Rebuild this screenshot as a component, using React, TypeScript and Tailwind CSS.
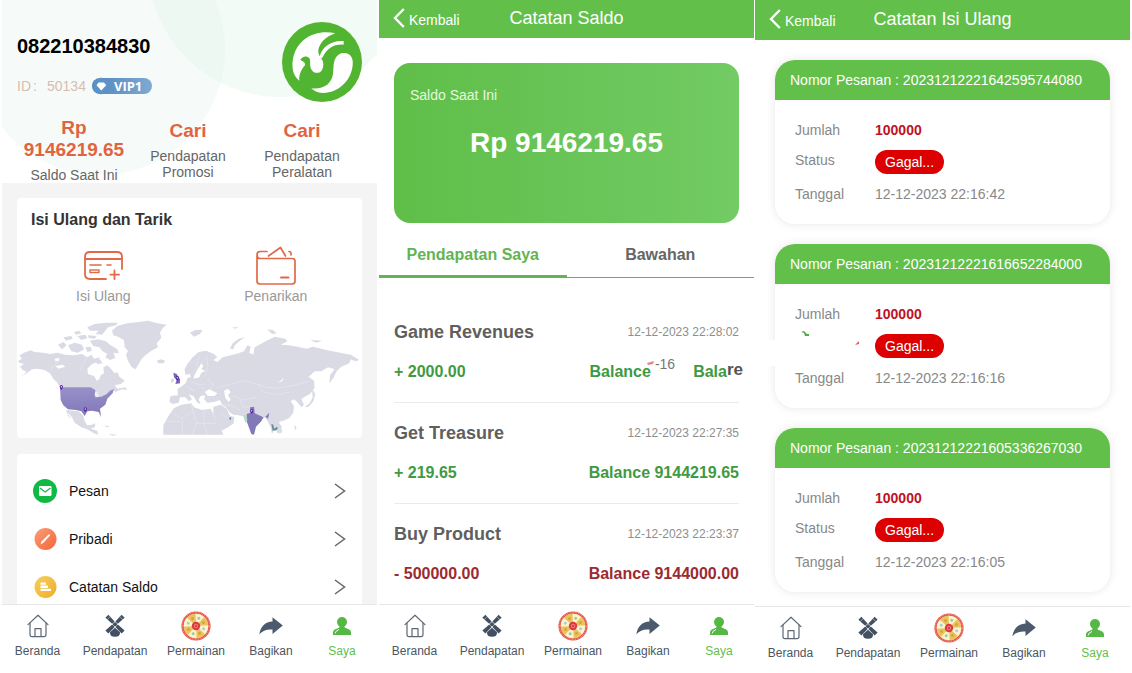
import React from "react";

const navItems = ["Beranda", "Pendapatan", "Permainan", "Bagikan", "Saya"];

const orders = [
  { no: "20231212221642595744080", status: "Status", date: "12-12-2023 22:16:42" },
  { no: "20231212221616652284000", status: "", date: "12-12-2023 22:16:16" },
  { no: "20231212221605336267030", status: "Status", date: "12-12-2023 22:16:05" },
];

function HomeIcon() {
  return (
    <svg width="22" height="24" viewBox="0 0 22 24" fill="none" stroke="#5d6876" strokeWidth="1.2" strokeLinejoin="round" strokeLinecap="round">
      <path d="M1 10.6 L11 1.2 L21 10.6" />
      <path d="M3 9 V20.5 Q3 22.6 5 22.6 H17 Q19 22.6 19 20.5 V9" />
      <path d="M8 22.4 V14.600 H14 V22.4" />
    </svg>
  );
}

function MillIcon() {
  return (
    <svg width="20" height="24" viewBox="0 0 20 24" fill="#434f62">
      <path d="M0.4 3.800 L3.400 0.800 L9.600 7.400 L7.200 9.800 Z" />
      <path d="M19.6 3.800 L16.600 0.800 L10.400 7.400 L12.800 9.800 Z" />
      <path d="M0.4 16.400 L3.400 19.400 L9.600 13 L7.200 10.600 Z" />
      <path d="M19.6 16.400 L16.600 19.400 L10.400 13 L12.800 10.600 Z" />
      <circle cx="10" cy="10.200" r="2" />
      <path d="M10 13.800 L15 18.200 Q15.400 22.800 10 22.800 Q4.600 22.800 5 18.200 Z" />
      <path d="M2.200 5.600 L4.800 3 M17.800 5.600 L15.200 3" stroke="#fff" strokeWidth="0.500" />
    </svg>
  );
}

function WheelIcon() {
  const sectors = [0, 45, 90, 135, 180, 225, 270, 315];
  return (
    <svg width="30" height="30" viewBox="0 0 30 30">
      <circle cx="15" cy="15" r="14.600" fill="#e4574f" />
      <circle cx="15" cy="15" r="13.600" fill="none" stroke="#f6a49a" strokeWidth="0.8" strokeDasharray="1.500 1.500" />
      <circle cx="15" cy="15" r="12.300" fill="#f6dc8c" />
      {sectors.map((a, i) => (
        <g key={a} transform={`rotate(${a + 20} 15 15)`}>
          <path d="M15 15 L10.400 3.700 A12.200 12.200 0 0 1 19.600 3.700 Z" fill={i % 2 ? "#e9c35e" : "#fcf3cf"} />
          <circle cx="15" cy="6.800" r="1.500" fill={i % 4 === 0 ? "#9ccba0" : i % 4 === 2 ? "#a9cfd6" : "#d9a443"} />
        </g>
      ))}
      <circle cx="15" cy="15" r="4.200" fill="#dc3b41" />
      <circle cx="15" cy="15" r="2" fill="#ef8a86" />
      <circle cx="15" cy="15" r="1" fill="#c9242d" />
    </svg>
  );
}

function ShareIcon() {
  return (
    <svg width="24" height="18" viewBox="0 0 24 18" fill="#4b5a6c">
      <path d="M13.500 0.200 L23.800 8.600 L13.500 17 V12.600 Q5.500 11.600 0.300 17.200 Q2.500 5.200 13.500 4.600 Z" />
    </svg>
  );
}

function UserIcon() {
  return (
    <svg width="20" height="20" viewBox="0 0 20 20">
      <circle cx="10" cy="6" r="5" fill="#55b845" />
      <path d="M7.400 9 H12.600 V11.600 L17.200 13.600 Q19 14.600 19 16.600 V19 H1 V16.600 Q1 14.600 2.800 13.600 L7.400 11.600 Z" fill="#55b845" />
      <path d="M3.200 17 Q3.400 15 6.600 13.600" fill="none" stroke="#fff" strokeWidth="1" strokeLinecap="round" />
    </svg>
  );
}

const navIcons = [<HomeIcon />, <MillIcon />, <WheelIcon />, <ShareIcon />, <UserIcon />];

function BottomNav({ height }: { height: string }) {
  return (
    <nav className={`grid shrink-0 grid-cols-[71fr_84fr_78fr_72fr_70fr] content-start border-t border-[#e6e6e6] bg-white pt-1.5 ${height}`}>
      {navItems.map((label, i) => (
        <a
          key={label}
          href="#"
          className={`flex flex-col items-center text-[12px] leading-4 ${i === 4 ? "text-[#62c04a]" : "text-[#4b5661]"}`}
        >
          <span className="flex h-8 items-center pb-0.5">{navIcons[i]}</span>
          {label}
        </a>
      ))}
    </nav>
  );
}

function TopBar({ title, height }: { title: string; height: string }) {
  return (
    <header className={`grid shrink-0 grid-cols-[1fr_auto_1fr] items-center bg-[#62c04a] text-white ${height}`}>
      <button type="button" className="flex items-center gap-1 pb-0.5 pl-3.5 text-left text-[14px]">
        <svg width="12" height="20" viewBox="0 0 12 20" fill="none" stroke="#fff" strokeWidth="2.400">
          <path d="M10.800 1 L2 10 L10.800 19" />
        </svg>
        <span className="pt-1 leading-5">Kembali</span>
      </button>
      <h1 className="pb-0.5 text-[18px] leading-6">{title}</h1>
    </header>
  );
}

function Logo() {
  return (
    <svg width="80" height="80" viewBox="30 20 240 240" role="img" aria-label="Logo">
      <circle cx="150" cy="140" r="120" fill="#52b531" />
      <path
        d="M190 54 C160 46 120 52 95 74 C66 98 56 138 64 170 C68 182 74 190 82 196 C80 178 88 162 99 150 C101 144 96 139 85 134 C90 124 104 119 112 129 C117 136 112 148 117 160 C123 175 143 177 150 164 C157 150 154 138 147 128 C141 120 138 112 139 104 C143 84 160 64 190 54 Z"
        fill="#fff"
      />
      <path d="M143 126 C147 96 178 74 215 77 L215 88 C185 86 166 98 151 127 C148 128 145 128 143 126 Z" fill="#fff" />
      <path d="M207 114 C232 108 245 124 242 150 C238 196 198 234 152 233 C136 232 126 227 118 219 C152 224 179 206 183 176 C186 152 181 126 207 114 Z" fill="#fff" />
    </svg>
  );
}

function WorldMap() {
  return (
    <svg viewBox="51 0 1035 384" className="block w-full" role="img" aria-label="Peta dunia">
      <defs>
        <linearGradient id="usa" x1="0" y1="0" x2="0" y2="1">
          <stop offset="0" stopColor="#9790c8" />
          <stop offset="1" stopColor="#8078b8" />
        </linearGradient>
      </defs>
      <g fill="#d9dae4">
        <path d="M55 152 L66 146 L58 136 L72 128 L92 121 L104 126 L130 128 L150 132 L172 128 L196 134 L222 136 L246 132 L262 142 L274 134 L282 146 L300 142 L292 156 L276 162 L262 176 L264 192 L282 198 L290 212 L298 208 L302 196 L312 190 L310 172 L322 166 L334 178 L344 190 L352 186 L358 200 L374 212 L362 222 L344 226 L352 236 L376 232 L382 240 L366 238 L346 246 L338 238 L318 256 L300 262 L290 250 L272 240 L180 232 L172 218 L160 206 L150 190 L134 180 L112 176 L96 178 L80 190 L62 200 L80 186 L68 180 L60 170 L72 162 L58 158 Z" />
        <path d="M198 300 L236 304 L250 318 L254 334 L262 346 L276 344 L286 340 L284 352 L272 356 L292 362 L294 374 L282 370 L262 358 L244 352 L224 338 L216 322 L202 306 L212 328 L204 318 Z" />
        <path d="M336 62 L352 48 L382 40 L416 36 L444 32 L472 40 L500 44 L488 54 L480 68 L484 84 L470 100 L474 112 L452 124 L438 134 L424 148 L414 166 L406 178 L394 170 L384 152 L378 134 L384 122 L374 112 L372 90 L354 80 L340 76 Z" />
        <path d="M262 52 L284 42 L318 38 L354 38 L348 46 L324 52 L316 62 L306 74 L286 72 L296 62 L270 62 Z" />
        <path d="M270 92 L294 88 L318 94 L330 104 L352 118 L356 130 L340 128 L346 144 L330 150 L316 142 L322 132 L308 124 L298 112 L280 108 Z" />
        <path d="M204 106 L224 98 L246 104 L252 118 L234 128 L214 124 Z M174 104 L190 96 L200 106 L186 118 Z M232 78 L256 74 L262 84 L244 90 Z M190 82 L214 78 L218 86 L198 92 Z M256 112 L272 110 L276 122 L262 126 Z M284 152 L300 148 L308 160 L292 162 Z M222 66 L238 62 L244 70 L228 74 Z M264 76 L290 78 L284 86 L266 84 Z" />
        <path d="M470 152 L482 148 L496 152 L490 160 L476 160 Z M512 210 L520 204 L522 214 L514 218 Z" />
        <path d="M554 178 L562 162 L578 142 L596 126 L618 122 L642 132 L652 142 L640 150 L652 156 L668 142 L692 136 L716 130 L732 124 L742 106 L752 110 L748 128 L760 134 L764 112 L782 102 L800 92 L824 80 L856 86 L862 94 L842 104 L866 106 L892 110 L920 116 L938 110 L964 116 L990 122 L1020 128 L1052 134 L1078 150 L1066 154 L1052 148 L1048 160 L1024 170 L1010 184 L1000 204 L988 220 L990 196 L1004 178 L984 172 L964 184 L944 184 L926 200 L942 212 L944 234 L930 252 L914 260 L904 268 L912 284 L904 292 L894 278 L882 268 L872 274 L882 288 L880 308 L868 324 L850 332 L836 336 L846 352 L836 366 L824 356 L816 372 L812 352 L804 336 L796 322 L784 330 L766 350 L758 372 L748 352 L742 334 L728 318 L704 316 L690 308 L678 292 L666 284 L660 270 L642 276 L622 278 L612 268 L616 256 L602 258 L596 268 L602 282 L592 278 L580 258 L566 252 L576 268 L566 274 L556 262 L540 262 L536 278 L518 282 L508 276 L512 258 L534 256 L532 238 L546 228 L558 218 L562 204 L572 202 L570 192 L556 194 Z" />
        <path d="M490 374 L490 346 L504 320 L522 294 L544 284 L574 280 L582 292 L606 300 L632 296 L640 312 L658 346 L670 374 Z" />
        <path d="M640 290 L662 284 L680 296 L690 318 L706 322 L702 340 L684 352 L662 364 L654 342 L640 310 Z" />
        <path d="M690 116 L698 100 L716 86 L734 82 L718 94 L704 106 L700 118 Z M570 68 L586 60 L608 60 L600 72 L582 80 Z M802 58 L818 60 L830 70 L816 72 Z M930 90 L966 92 L950 98 Z M696 52 L716 52 L706 56 Z M936 236 L946 252 L940 274 L926 290 L914 292 L930 278 L938 262 Z M884 346 L890 352 L884 362 Z M314 346 L330 350 L318 352 Z M326 372 L352 374 L338 377 Z" />
      </g>
      <g fill="#fff">
        <path d="M584 194 L594 176 L604 160 L610 168 L604 178 L616 182 L604 188 L598 202 L580 206 Z" />
        <path d="M614 246 L628 238 L652 250 L644 258 L624 258 Z M672 242 L684 236 L692 246 L684 256 L692 268 L686 276 L676 264 Z" />
        <path d="M166 168 L188 164 L196 170 L176 176 Z M164 146 L178 144 L176 154 L166 154 Z" />
        <path d="M704 314 L736 320 L744 342 L752 374 L700 374 L700 344 Z" />
        <path d="M834 218 L852 204 L846 214 Z" />
      </g>
      <g fill="none" stroke="#ebebf2" strokeWidth="1.500">
        <path d="M622 206 L640 220 L632 238 M560 230 L584 244 M572 214 L596 224 L618 222 M604 232 L618 244 M650 234 L700 220 L730 212 L770 222 L800 232 L840 234 L880 226 L926 214 M774 224 L790 246 L830 254 L870 246 M700 258 L730 270 L770 262 M720 270 L728 290 L760 292 M664 284 L700 288 L720 300 M598 138 L588 176 M618 136 L624 168 L614 202" />
        <path d="M520 310 L546 326 L548 374 M546 326 L580 300 M574 284 L590 340 L576 374 M612 300 L612 340 L650 340 M590 340 L612 340 L622 374 M500 334 L540 334 M664 310 L690 330 M264 136 L240 180 M180 146 L150 180" />
      </g>
      <path d="M180 232 L272 232 L286 240 L284 256 L292 260 L304 260 L320 252 L330 242 L342 236 L338 250 L322 266 L316 284 L300 296 L303 322 L296 306 L276 302 L262 304 L254 318 L244 304 L228 300 L204 298 L190 286 L182 270 Z" fill="url(#usa)" />
      <path d="M286 246 L294 244 L292 262 L286 262 Z" fill="#eceaf6" />
      <path d="M740 312 L752 308 L750 292 L762 290 L764 310 L790 322 L784 334 L768 350 L762 374 L754 372 L746 350 L740 334 Z M796 320 L808 308 L804 326 Z" fill="#8179b8" />
      <path d="M520 188 L530 192 L540 208 L540 220 L526 222 L530 210 L522 202 Z" fill="#7566b9" />
      <path d="M814 342 L820 344 L822 356 L832 350 L834 360 L818 362 Z M686 326 L694 320 L692 330 Z" fill="#5f8d98" />
      <path d="M730 318 L740 312 L742 332 L736 338 Z" fill="#b4d8cb" />
      <circle cx="838" cy="362" r="8" fill="#cfe3e4" />
      {[
        [184, 231],
        [256, 298],
        [532, 204],
        [755, 303],
      ].map(([x, y]) => (
        <g key={x}>
          <path d={`M${x - 5} ${y - 1} A5 5 0 1 1 ${x + 5} ${y - 1} Q${x + 4} ${y + 4} ${x} ${y + 9} Q${x - 4} ${y + 4} ${x - 5} ${y - 1} Z`} fill="#5a24a8" />
          <circle cx={x} cy={y - 1} r="2.200" fill="#e9dcff" />
        </g>
      ))}
    </svg>
  );
}

function Stat({ value, label }: { value: string; label: string }) {
  return (
    <div className="flex flex-col gap-1.5 px-1.5 text-center">
      <strong className="text-[19px] leading-[22px] text-[#e0653f]">
        {value.split("|").map((line) => (
          <span key={line} className="block">{line}</span>
        ))}
      </strong>
      <span className="text-[14px] leading-4 text-[#666]">{label}</span>
    </div>
  );
}

const menu = [
  {
    label: "Pesan",
    icon: (
      <svg width="24" height="24" viewBox="0 0 24 24">
        <circle cx="12" cy="12" r="12" fill="#10b944" />
        <rect x="6" y="7" width="12.500" height="10" rx="1.200" fill="#fff" />
        <path d="M7 9 L12.200 13 L17.500 9" fill="none" stroke="#10b944" strokeWidth="1.200" />
      </svg>
    ),
  },
  {
    label: "Pribadi",
    icon: (
      <svg width="24" height="24" viewBox="0 0 24 24">
        <defs>
          <linearGradient id="pen" x1="0" y1="0" x2="1" y2="1">
            <stop offset="0" stopColor="#fb9f78" />
            <stop offset="1" stopColor="#f56437" />
          </linearGradient>
        </defs>
        <circle cx="12.500" cy="12" r="11" fill="url(#pen)" />
        <path d="M7.500 17.500 L8.500 14.500 L15.500 7.500 Q17.500 6.500 16.800 8.800 L10.400 15.800 Z" fill="#fff" />
      </svg>
    ),
  },
  {
    label: "Catatan Saldo",
    icon: (
      <svg width="24" height="24" viewBox="0 0 24 24">
        <defs>
          <linearGradient id="coin" x1="0" y1="0" x2="1" y2="1">
            <stop offset="0" stopColor="#f7cf5f" />
            <stop offset="1" stopColor="#ecae2a" />
          </linearGradient>
        </defs>
        <circle cx="12.500" cy="12" r="11" fill="url(#coin)" />
        <path d="M7.500 7.500 H13 V9.800 H7.500 Z M7.500 10.600 H15 V12.900 H7.500 Z M7.500 13.700 H18 V16 H7.500 Z" fill="#fff" />
      </svg>
    ),
  },
];

function Profile() {
  return (
    <section className="flex h-full min-h-0 flex-col pr-px">
      <main className="min-h-0 flex-1 overflow-hidden bg-[#f4f4f4]">
        <div className="relative overflow-hidden bg-white">
          <svg className="absolute inset-0 h-full w-full" aria-hidden="true">
            <circle cx="98" cy="50" r="125" fill="#e0f3ea" fillOpacity="0.300" />
            <circle cx="278" cy="-35" r="132" fill="#d8f3e0" fillOpacity="0.330" />
          </svg>
          <div className="relative flex justify-between px-[15px] pt-[22px]">
            <div className="pt-3">
              <h1 className="text-[20px] leading-6 font-bold text-black">082210384830</h1>
              <div className="flex items-center gap-1.5 pt-4">
                <span className="text-[14px] leading-6 text-[#d6bdb0]">
                  ID<span className="inline-block w-4 pl-0.5">:</span>50134
                </span>
                <span className="flex h-4 items-center gap-1 rounded-full bg-linear-to-r from-[#5187bd] to-[#7ea9d2] pr-2.5 font-['Open_Sans',sans-serif] text-[13px] leading-4 font-bold text-white">
                  <svg width="18" height="18" viewBox="0 0 16 18">
                    <path d="M8 0.500 L15.500 4.500 V13.500 L8 17.500 L0.500 13.500 V4.500 Z" fill="#5b93c8" />
                    <path d="M5.500 5.500 H11 L13.200 8.300 L8.300 13.500 L3.500 8.300 Z" fill="#fff" />
                  </svg>
                  VIP1
                </span>
              </div>
            </div>
            <Logo />
          </div>
          <div className="relative grid grid-cols-3 items-center pt-[15px] pr-[18px] pl-[15px]">
            <Stat value="Rp|9146219.65" label="Saldo Saat Ini" />
            <Stat value="Cari" label="Pendapatan Promosi" />
            <Stat value="Cari" label="Pendapatan Peralatan" />
          </div>
        </div>
        <div className="flex flex-col gap-4 px-[15px] pt-[15px]">
          <div className="rounded bg-white">
            <h2 className="px-3.5 pt-2.5 text-[16px] leading-6 font-bold text-[#333]">Isi Ulang dan Tarik</h2>
            <div className="grid grid-cols-2 pt-3">
              <a href="#" className="flex flex-col items-center text-[14px] leading-4 text-[#999]">
                <svg width="44" height="44" viewBox="0 0 44 44" fill="none" stroke="#e06a48" strokeWidth="1.800" strokeLinecap="round">
                  <path d="M25 35 H9 Q4 35 4 30 V13 Q4 8 9 8 H36 Q41 8 41 13 V25" />
                  <path d="M4 15 H41" />
                  <path d="M9 21 H20 M26 21 H30" strokeWidth="1.600" />
                  <rect x="9" y="26" width="9" height="2.500" strokeWidth="1.400" />
                  <path d="M33.500 26.500 V35 M29.500 30.700 H38" />
                </svg>
                Isi Ulang
              </a>
              <a href="#" className="flex flex-col items-center text-[14px] leading-4 text-[#999]">
                <svg width="44" height="44" viewBox="0 0 44 44" fill="none" stroke="#e06a48" strokeWidth="1.700" strokeLinecap="round" strokeLinejoin="round">
                  <path d="M3 12 V37 Q3 40 6 40 H38 Q41 40 41 37 V17 Q41 14.500 38 14.500 H6 Q3 14.500 3 11 Q3 7.500 6 7.500 H13" />
                  <path d="M14.500 12 L26.500 3.500 L31.500 12 M35 7.500 Q37.500 7.500 37 11" />
                  <path d="M27 33.500 H34.500" strokeWidth="2" />
                </svg>
                Penarikan
              </a>
            </div>
            <div className="pt-1.5">
              <WorldMap />
            </div>
          </div>
          <ul className="rounded-t bg-white px-4 pt-[13px] pb-4">
            {menu.map((m) => (
              <li key={m.label}>
                <a href="#" className="flex h-12 items-center text-[14px] text-[#111]">
                  {m.icon}
                  <span className="flex-1 pl-3">{m.label}</span>
                  <svg width="12" height="16" viewBox="0 0 12 16" fill="none" stroke="#666" strokeWidth="1.500">
                    <path d="M1 1 L10.500 8 L1 15" />
                  </svg>
                </a>
              </li>
            ))}
          </ul>
        </div>
      </main>
      <BottomNav height="h-[69px]" />
    </section>
  );
}

function Entry({ title, date, amount, color, children }: { title: string; date: string; amount: string; color: string; children: React.ReactNode }) {
  return (
    <li className="border-b border-[#ebebeb] py-[18px]">
      <div className="flex items-center justify-between">
        <h3 className="text-[18px] leading-6 font-bold text-[#5f5f5f]">{title}</h3>
        <time className="text-[12px] leading-6 text-[#8e8e8e]">{date}</time>
      </div>
      <div className={`flex justify-between pt-4 text-[16px] leading-6 font-bold ${color}`}>
        <span>{amount}</span>
        {children}
      </div>
    </li>
  );
}

function Balance() {
  return (
    <section className="flex h-full min-h-0 flex-col bg-white pl-px">
      <TopBar title="Catatan Saldo" height="h-[38px]" />
      <main className="min-h-0 flex-1 overflow-hidden">
        <div className="px-[15px] pt-[25px]">
          <div className="h-40 rounded-2xl bg-linear-to-r from-[#5fbe48] to-[#72cb64] px-4 pt-[22px] text-white">
            <p className="text-[14px] leading-5 text-[#e4f8df]">Saldo Saat Ini</p>
            <p className="pt-5 text-center text-[28px] leading-9 font-bold">Rp 9146219.65</p>
          </div>
        </div>
        <div className="mt-2 grid h-[47px] grid-cols-2 items-end text-[16px] leading-6 font-bold">
          <button type="button" className="h-full border-b-[3px] border-[#62b453] pt-1 text-[#62b453]">Pendapatan Saya</button>
          <button type="button" className="h-full border-b border-[#62b453] pt-0.5 text-[#666]">Bawahan</button>
        </div>
        <ul className="px-[15px] pt-6">
          <Entry title="Game Revenues" date="12-12-2023 22:28:02" amount="+ 2000.00" color="text-[#3f9a43]">
            <span className="relative -mr-1 flex">
              <svg className="absolute top-0 left-[57px]" width="8" height="6" viewBox="0 0 8 6">
                <path d="M0 3 L7 1 L6 4 L1 5 Z" fill="#e4858c" />
              </svg>
              Balance
              <span className="-mt-2 ml-1 text-[14px] font-normal text-[#777]">-16</span>
              <span className="pl-[18px]">Bala</span>
              <span className="-mt-0.5 text-[17px] text-[#555]">re</span>
            </span>
          </Entry>
          <Entry title="Get Treasure" date="12-12-2023 22:27:35" amount="+ 219.65" color="text-[#3f9a43]">
            <span>Balance 9144219.65</span>
          </Entry>
          <Entry title="Buy Product" date="12-12-2023 22:23:37" amount="- 500000.00" color="text-[#9b2b30]">
            <span>Balance 9144000.00</span>
          </Entry>
        </ul>
      </main>
      <BottomNav height="h-[69px]" />
    </section>
  );
}

function Recharge() {
  return (
    <section className="flex h-full min-h-0 flex-col bg-white pl-px">
      <TopBar title="Catatan Isi Ulang" height="h-10" />
      <main className="flex min-h-0 flex-1 flex-col gap-5 overflow-hidden px-5 pt-5">
        {orders.map((o) => (
          <article key={o.no} className="relative shrink-0 rounded-[20px] bg-white shadow-[0_0_10px_rgba(0,0,0,0.1)]">
            <h2 className="rounded-t-[20px] bg-[#62c04a] px-[15px] text-[14px] leading-10 text-white">Nomor Pesanan : {o.no}</h2>
            {!o.status && (
              <svg className="absolute top-[84px] left-[-12px]" width="112" height="38" viewBox="0 0 112 38" aria-hidden="true">
                <path d="M0 12 H32 V0 H112 V30 H32 V38 H0 Z" fill="#fff" />
                <path d="M38 4 L41 3 L44 6 L46 6 L46 8 L42 8 L41 5 Z" fill="#57a54c" />
                <path d="M92 17 L96 13 L96 16 Z" fill="#dc5a60" />
              </svg>
            )}
            <dl className="relative grid grid-cols-[80px_auto] content-start justify-start gap-y-2.5 p-5 text-[14px] leading-5 text-[#888]">
              <dt>Jumlah</dt>
              <dd className="font-bold text-[#c01226]">100000</dd>
              <dt>{o.status}</dt>
              <dd>
                <span className="inline-block rounded-full bg-[#dc0000] px-2.5 align-top leading-6 text-white">Gagal...</span>
              </dd>
              <dt>Tanggal</dt>
              <dd>{o.date}</dd>
            </dl>
          </article>
        ))}
      </main>
      <BottomNav height="h-[67px]" />
    </section>
  );
}

export default function App() {
  return (
    <div className="grid h-screen grid-cols-3 bg-white px-0.5 font-['Liberation_Sans',Arial,sans-serif]">
      <Profile />
      <Balance />
      <Recharge />
    </div>
  );
}
